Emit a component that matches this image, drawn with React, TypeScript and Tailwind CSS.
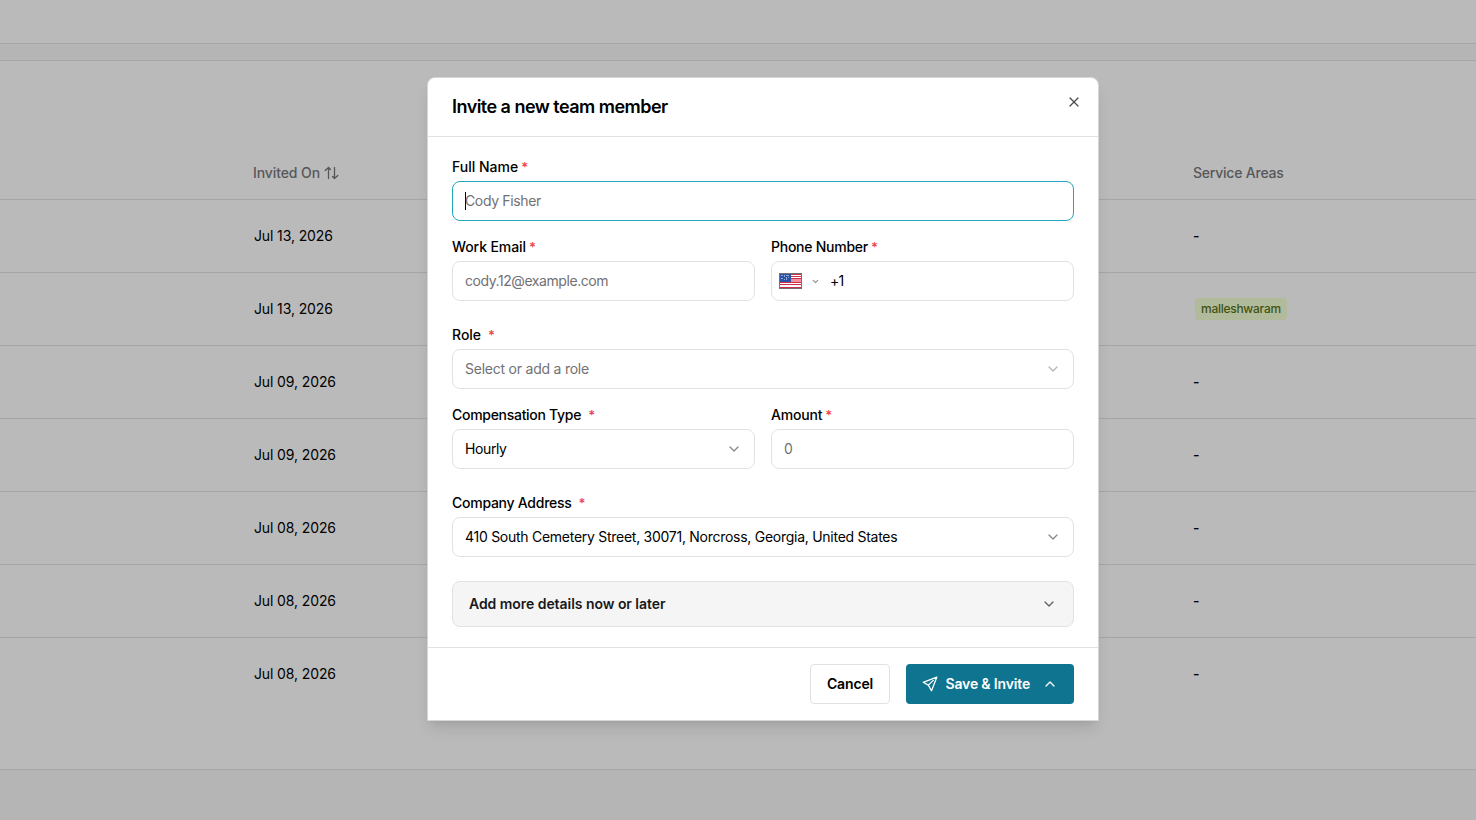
import React from "react";
import { ChevronDown, ChevronUp, X } from "lucide-react";

type Row = { date: string; area?: string };

const rows: Row[] = [
  { date: "Jul 13, 2026" },
  { date: "Jul 13, 2026", area: "malleshwaram" },
  { date: "Jul 09, 2026" },
  { date: "Jul 09, 2026" },
  { date: "Jul 08, 2026" },
  { date: "Jul 08, 2026" },
  { date: "Jul 08, 2026" },
];

function SortIcon() {
  return (
    <svg width="15" height="14" viewBox="0 0 15 14" fill="none" stroke="currentColor" strokeWidth="1.3" strokeLinecap="round" strokeLinejoin="round">
      <path d="M4.5 12.5V1.5M1.2 4.5L4.5 1.5l2 2M10.5 1.5v11M8.5 10.5l2 2 3.3-3" />
    </svg>
  );
}

function SendIcon() {
  return (
    <svg width="16" height="16" viewBox="0 0 16 16" fill="none" stroke="currentColor" strokeWidth="1.3" strokeLinejoin="round" strokeLinecap="round">
      <path d="M14.8 1.2L1.2 6.3l5.1 2.8 3.2 5.7L14.8 1.2ZM6.3 9.1l5-4.7" />
    </svg>
  );
}

function Flag() {
  return (
    <svg width="23" height="16" viewBox="0 0 23 16" shapeRendering="crispEdges" className="mt-0.5">
      <rect width="23" height="16" fill="#77706f" />
      <rect x="1" y="1" width="21" height="14" fill="#fff" />
      {[1, 3, 5, 9, 11, 14].map((y) => (
        <rect key={y} x="1" y={y} width="21" height="1" fill="#c9304c" />
      ))}
      <rect x="12" y="6" width="10" height="3" fill="#f5909f" />
      <rect x="1" y="1" width="11" height="8" fill="#2b52a5" />
      <path d="M2 2.5h2M2 5.5h2M5.5 2v2M5.5 6v1M7 2.5h3M7.5 4v3M9.5 4v1" stroke="#8fa8dc" strokeWidth="1" />
    </svg>
  );
}

function Label({ children, gap = "ml-[3px]", className = "" }: { children: React.ReactNode; gap?: string; className?: string }) {
  return (
    <div className="flex h-5 items-center whitespace-nowrap text-[14px] font-medium leading-5 text-black">
      <span className={className}>{children}</span>
      <span className={`text-[13px] font-semibold text-[#ea4547] ${gap}`}>*</span>
    </div>
  );
}

const box = "mt-1 flex h-10 items-center whitespace-nowrap rounded-lg border bg-white px-3 pb-0.5 text-[14px]";

export default function App() {
  return (
    <div className="relative h-[820px] w-[1476px] overflow-hidden bg-[#bababa] font-['Inter',sans-serif] text-[14px] text-black">
      <div className="h-11 border-b border-[#a6a6a6]" />
      <div className="h-[17px] border-b border-[#a6a6a6] bg-[#b5b5b5]" />
      <div className="h-[709px] border-b border-[#a6a6a6]">
        <div className="flex h-[139px] items-end border-b border-[#a6a6a6] pb-4 pl-[253px] font-medium text-[#57575a]">
          <div className="flex w-[940px] items-center gap-1 leading-5">
            <span className="tracking-[-0.1px]">Invited On</span>
            <SortIcon />
          </div>
          <span className="leading-5 tracking-[-0.22px]">Service Areas</span>
        </div>
        {rows.map((row, i) => (
          <div key={i} className={`flex h-[73px] items-center pl-[254px] ${i < 6 ? "border-b border-[#a6a6a6]" : ""}`}>
            <div className="w-[939px] pb-0.5 tracking-[-0.12px]">{row.date}</div>
            {row.area ? (
              <div className="ml-0.5 flex h-[22px] items-center rounded bg-[#b2ba9c] px-1.5 text-[12px] font-medium tracking-[-0.27px] text-[#3f5312]">{row.area}</div>
            ) : (
              <div className="pb-0.5 font-medium">-</div>
            )}
          </div>
        ))}
      </div>
      <div className="h-[50px] bg-[#b5b5b5]" />

      <div role="dialog" className="absolute left-[427px] top-[77px] flex h-[644px] w-[672px] flex-col rounded-t-lg border border-[#d6d6d6] bg-white shadow-[0_10px_15px_-3px_rgba(0,0,0,0.1),0_4px_6px_-4px_rgba(0,0,0,0.1)]">
        <div className="flex h-[59px] shrink-0 justify-between border-b border-[#e2e2e4] pl-6 pr-4">
          <h2 className="flex items-center whitespace-nowrap pb-0.5 text-[18px] font-semibold tracking-[-0.53px]">Invite a new team member</h2>
          <button className="mt-4 h-4 text-[#4b4b4f]"><X size={16} strokeWidth={1.9} /></button>
        </div>

        <div className="h-[511px] shrink-0 border-b border-[#e2e2e4] px-6 pt-5">
          <Label>Full Name</Label>
          <div className={`${box} border-[#22a6bd] text-[#717175]`}>
            <span className="-mr-px mt-0.5 h-[18px] w-px bg-black" />
            <span className="tracking-[-0.36px]">Cody Fisher</span>
          </div>

          <div className="mt-4 grid grid-cols-2 gap-4">
            <div>
              <Label className="tracking-[-0.1px]">Work Email</Label>
              <div className={`${box} border-[#e2e2e4] tracking-[-0.43px] text-[#717175]`}>cody.12@example.com</div>
            </div>
            <div>
              <Label className="tracking-[-0.25px]">Phone Number</Label>
              <div className={`${box} border-[#e2e2e4] pl-[7px]`}>
                <Flag />
                <ChevronDown size={9} strokeWidth={2.8} className="ml-[9px] mt-0.5 text-[#8a8a8e]" />
                <span className="ml-[10px] tracking-[-0.8px]">+1</span>
              </div>
            </div>
          </div>

          <div className="mt-6">
            <Label gap="ml-[7px]">Role</Label>
            <div className={`${box} justify-between border-[#e2e2e4] text-[#717175]`}>
              <span className="tracking-[-0.23px]">Select or add a role</span>
              <ChevronDown size={16} strokeWidth={1.9} className="mt-0.5 text-[#b4b4b7]" />
            </div>
          </div>

          <div className="mt-4 grid grid-cols-2 gap-4">
            <div>
              <Label gap="ml-[7px]" className="tracking-[-0.29px]">Compensation Type</Label>
              <div className={`${box} justify-between border-[#e2e2e4]`}>
                <span className="tracking-[-0.4px]">Hourly</span>
                <ChevronDown size={16} strokeWidth={1.9} className="mt-0.5 text-[#85858a]" />
              </div>
            </div>
            <div>
              <Label className="tracking-[-0.2px]">Amount</Label>
              <div className={`${box} border-[#e2e2e4] text-[#717175]`}>0</div>
            </div>
          </div>

          <div className="mt-6">
            <Label gap="ml-[7px]" className="tracking-[-0.26px]">Company Address</Label>
            <div className={`${box} justify-between border-[#e2e2e4]`}>
              <span className="tracking-[-0.27px]">410 South Cemetery Street, 30071, Norcross, Georgia, United States</span>
              <ChevronDown size={16} strokeWidth={1.9} className="mt-0.5 text-[#85858a]" />
            </div>
          </div>

          <div className="mt-6 flex h-[46px] items-center justify-between rounded-lg border border-[#e2e2e4] bg-[#f5f5f5] px-4 font-semibold text-[#18181b]">
            <span className="pb-0.5 tracking-[-0.05px]">Add more details now or later</span>
            <ChevronDown size={16} strokeWidth={1.9} className="text-[#5f5f64]" />
          </div>
        </div>

        <div className="flex flex-1 items-start justify-end gap-4 px-6 pt-4">
          <button className="h-10 w-20 rounded border border-[#e2e2e4] pb-0.5 font-semibold tracking-[-0.15px]">Cancel</button>
          <button className="flex h-10 w-[168px] items-center rounded bg-[#0e7490] pl-4 font-semibold text-white">
            <SendIcon />
            <span className="ml-[7.5px] whitespace-nowrap pb-0.5 tracking-[-0.16px]">Save &amp; Invite</span>
            <ChevronUp size={16} strokeWidth={1.9} className="ml-3" />
          </button>
        </div>
      </div>
    </div>
  );
}
